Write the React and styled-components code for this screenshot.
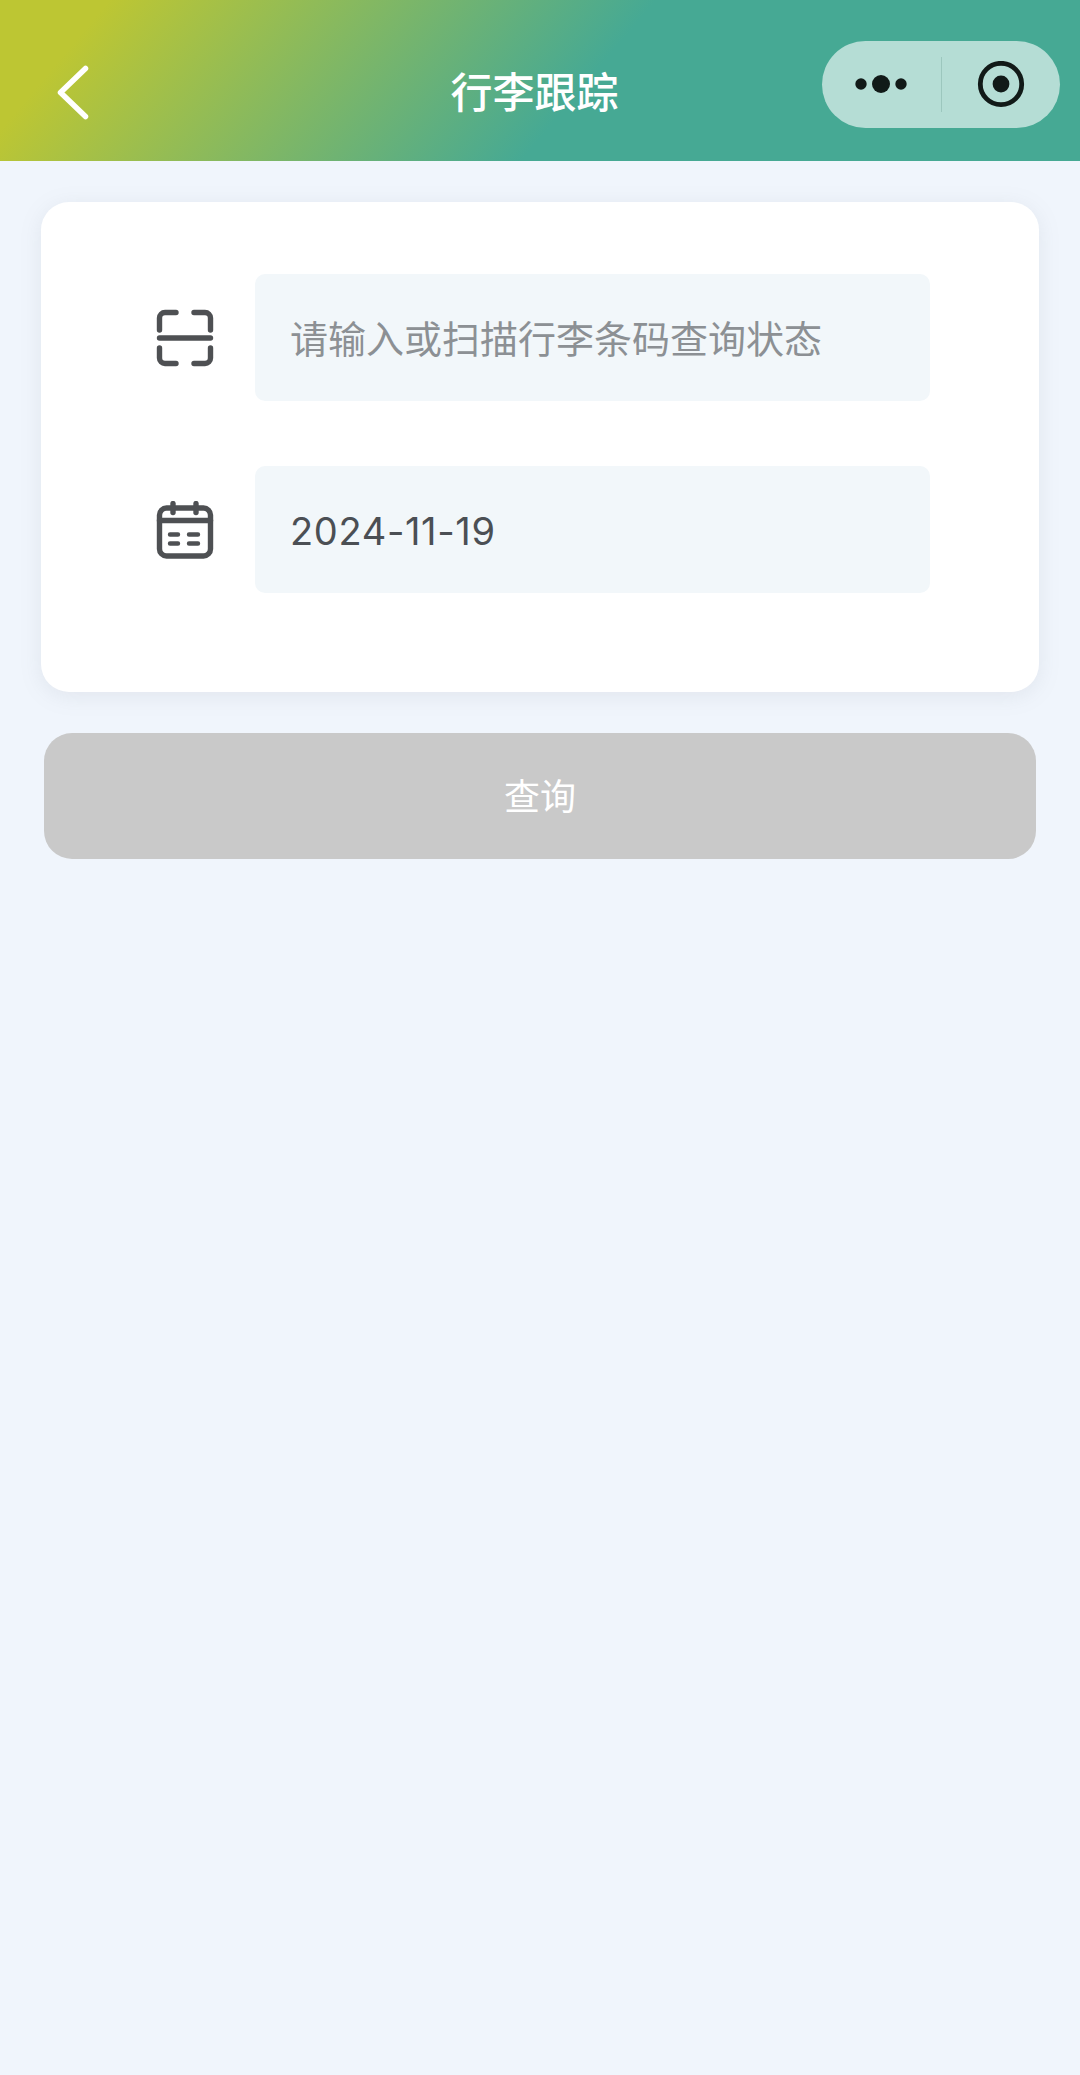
import React from 'react'
import styled, { createGlobalStyle } from 'styled-components'

const App = () => {
    return (
        <Page>
            <GlobalStyle />
            <Header>
                <BackButton>
                    <svg width="44" height="64" viewBox="0 0 44 64" fill="none">
                        <path d="M34.5 7.5 L9.5 31.5 L34.5 55.5" stroke="#fff" strokeWidth="5.5" strokeLinecap="round" strokeLinejoin="round" />
                    </svg>
                </BackButton>
                <Title>行李跟踪</Title>
                <Capsule>
                    <CapsulePart $width={119}>
                        <svg width="56" height="20" viewBox="0 0 56 20">
                            <circle cx="7" cy="9" r="5.7" fill="#111a18" />
                            <circle cx="27" cy="9" r="9" fill="#111a18" />
                            <circle cx="47" cy="9" r="5.7" fill="#111a18" />
                        </svg>
                    </CapsulePart>
                    <CapsuleDivider />
                    <CapsulePart $width={118}>
                        <svg width="48" height="48" viewBox="0 0 48 48" fill="none">
                            <circle cx="24" cy="23" r="20.7" stroke="#111a18" strokeWidth="4.8" />
                            <circle cx="24" cy="23" r="8.4" fill="#111a18" />
                        </svg>
                    </CapsulePart>
                </Capsule>
            </Header>
            <Content>
                <Card>
                    <FormRow>
                        <FieldIcon>
                            <svg width="58" height="58" viewBox="0 0 58 58" fill="none" stroke="#4e5053" strokeWidth="5.4" strokeLinecap="round" strokeLinejoin="round">
                                <path d="M20 3.5H9a5.5 5.5 0 0 0-5.5 5.5v12" />
                                <path d="M38 3.5h11a5.5 5.5 0 0 1 5.5 5.5v12" />
                                <path d="M3.5 29h51" />
                                <path d="M3.5 39v10a5.5 5.5 0 0 0 5.5 5.5h11" />
                                <path d="M54.5 39v10a5.5 5.5 0 0 1-5.5 5.5H38" />
                            </svg>
                        </FieldIcon>
                        <Field>
                            <FieldText $muted>请输入或扫描行李条码查询状态</FieldText>
                        </Field>
                    </FormRow>
                    <FormRow>
                        <FieldIcon>
                            <svg width="58" height="58" viewBox="0 0 58 58" fill="none" stroke="#4e5053" strokeWidth="5.4" strokeLinecap="round" strokeLinejoin="round">
                                <rect x="3.5" y="7" width="51" height="48" rx="7" />
                                <path d="M3.5 19.5h51" />
                                <path d="M17 2.5v9" />
                                <path d="M40 2.5v9" />
                                <path d="M14 33.5h8M33 33.5h9M14 42.5h8M33 42.5h9" strokeWidth="4.4" />
                            </svg>
                        </FieldIcon>
                        <Field>
                            <DateText>2024-11-19</DateText>
                        </Field>
                    </FormRow>
                </Card>
                <QueryButton>查询</QueryButton>
            </Content>
        </Page>
    )
}

export default App

const GlobalStyle = createGlobalStyle`
    html, body {
        margin: 0;
        padding: 0;
        background-color: #f0f5fc;
    }
`;

const Page = styled.div`
    width: 1080px;
    height: 2075px;
    overflow: hidden;
    background-color: #f0f5fc;
    font-family: Inter, "Noto Sans CJK SC", sans-serif;
`;

const Header = styled.header`
    position: relative;
    display: flex;
    align-items: center;
    justify-content: center;
    height: 161px;
    padding-right: 11px;
    box-sizing: border-box;
    background: linear-gradient(130deg, #bdc633 9%, #46a994 54%);
`;

const BackButton = styled.div`
    position: absolute;
    left: 51px;
    top: 61px;
    display: flex;
`;

const Title = styled.h1`
    margin: 25px 0 0;
    font-size: 42px;
    line-height: 60px;
    font-weight: 500;
    color: #ffffff;
`;

const Capsule = styled.div`
    position: absolute;
    left: 822px;
    top: 41px;
    display: flex;
    align-items: center;
    width: 238px;
    height: 87px;
    border-radius: 44px;
    background-color: #b5ddd5;
`;

const CapsulePart = styled.div`
    display: flex;
    align-items: center;
    justify-content: center;
    width: ${props => props.$width}px;
    height: 100%;
`;

const CapsuleDivider = styled.div`
    width: 1px;
    height: 55px;
    background-color: #9cc7be;
`;

const Content = styled.main`
    display: flex;
    flex-direction: column;
    align-items: center;
    padding-top: 41px;
`;

const Card = styled.section`
    display: flex;
    flex-direction: column;
    gap: 65px;
    width: 998px;
    height: 490px;
    padding: 72px 109px 0 115px;
    box-sizing: border-box;
    background-color: #ffffff;
    border-radius: 28px;
    box-shadow: 0 4px 22px rgba(120, 130, 140, 0.13);
`;

const FormRow = styled.div`
    display: flex;
    align-items: center;
    gap: 41px;
`;

const FieldIcon = styled.div`
    display: flex;
    width: 58px;
    height: 58px;
`;

const Field = styled.div`
    display: flex;
    align-items: center;
    width: 675px;
    height: 127px;
    padding: 2px 0 0 35px;
    box-sizing: border-box;
    background-color: #f2f7fa;
    border-radius: 10px;
`;

const FieldText = styled.span`
    font-size: 38px;
    line-height: 54px;
    color: ${props => (props.$muted ? '#8c9094' : '#4b4f54')};
`;

const DateText = styled(FieldText)`
    letter-spacing: 0.65px;
`;

const QueryButton = styled.div`
    display: flex;
    align-items: center;
    justify-content: center;
    width: 992px;
    height: 126px;
    padding-bottom: 5px;
    box-sizing: border-box;
    margin-top: 41px;
    background-color: #c9c9c9;
    border-radius: 28px;
    font-size: 36px;
    color: #ffffff;
`;
